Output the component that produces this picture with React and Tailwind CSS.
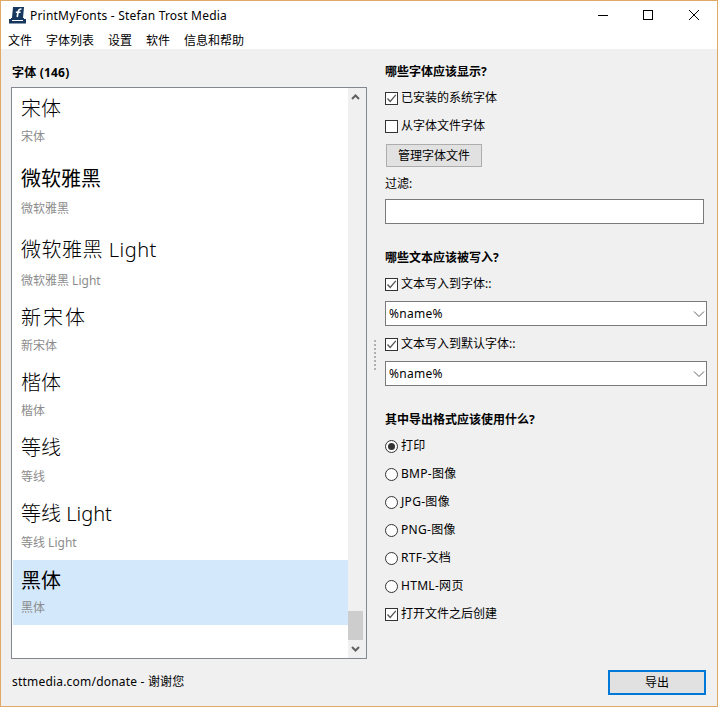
import { useState } from "react";

const fontStack = "font-['Noto_Sans','Noto_Sans_CJK_SC',sans-serif]";

const fonts = [
	{ name: "宋体", height: "h-[69px]", pt: "pt-[7px]", gap: "mt-[7px]", style: "font-light" },
	{ name: "微软雅黑", height: "h-[72px]", pt: "pt-[8px]", gap: "mt-[9px]", style: "font-normal" },
	{ name: "微软雅黑 Light", height: "h-[67px]", pt: "pt-[7px]", gap: "mt-[10px]", style: "font-light tracking-[0.5px]" },
	{ name: "新宋体", height: "h-[65px]", pt: "pt-[8px]", gap: "mt-[7px]", style: "font-light tracking-[2px]" },
	{ name: "楷体", height: "h-[65px]", pt: "pt-[8px]", gap: "mt-[7px]", style: "font-light" },
	{ name: "等线", height: "h-[67px]", pt: "pt-[8px]", gap: "mt-[8px]", style: "font-light" },
	{ name: "等线 Light", height: "h-[66px]", pt: "pt-[7px]", gap: "mt-[8px]", style: "font-light" },
	{ name: "黑体", height: "h-[65px]", pt: "pt-[8px]", gap: "mt-[6px]", style: "font-normal" },
];

const menus = ["文件", "字体列表", "设置", "软件", "信息和帮助"];

function Checkbox({ label, checked, className }) {
	return (
		<div className={`flex items-center h-[16px] gap-[3px] ${className}`}>
			<span className="w-[13px] h-[13px] border border-[#333333] bg-white flex items-center justify-center shrink-0">
				{checked && (
					<svg width="11" height="11" viewBox="0 0 11 11">
						<path d="M1.5 5.5 L4.2 8.5 L9.8 1.8" fill="none" stroke="#555555" strokeWidth="1.3" />
					</svg>
				)}
			</span>
			<span className="text-xs leading-4 text-black">{label}</span>
		</div>
	);
}

function Radio({ label, checked }) {
	return (
		<div className="flex items-center h-[16px] gap-[3px] mb-[12px]">
			<span className="w-[13px] h-[13px] rounded-full border border-[#333333] bg-white flex items-center justify-center shrink-0">
				{checked && <span className="w-[7px] h-[7px] rounded-full bg-[#333333]" />}
			</span>
			<span className="text-xs leading-4 text-black tracking-[0.3px]">{label}</span>
		</div>
	);
}

function Heading({ children, className }) {
	return <div className={`text-xs leading-4 font-bold text-black h-[16px] ${className}`}>{children}</div>;
}

function SelectBox({ className }) {
	return (
		<div className={`w-[322px] h-[25px] border border-[#7a7a7a] bg-white flex items-center justify-between pl-[3px] pr-[1px] ${className}`}>
			<span className="text-xs text-black tracking-[0.3px]">%name%</span>
			<svg width="12" height="8" viewBox="0 0 12 8">
				<path d="M1 1.5 L6 6.5 L11 1.5" fill="none" stroke="#606060" strokeWidth="1" />
			</svg>
		</div>
	);
}

function AppIcon() {
	return (
		<svg width="17" height="17" viewBox="0 0 17 17" className="shrink-0">
			<path d="M4 0 L15 0 L14 11 L3 11 Z" fill="#17375e" />
			<path d="M12.5 2 C9.5 1.8 9.4 3.5 9 5.5 L8.2 10 M6.8 5.2 L11.6 5.2" fill="none" stroke="#ffffff" strokeWidth="1.6" />
			<path d="M2 11 L15 11 L15 12 L17 12 L17 16.5 L0 16.5 L0 12 L2 12 Z" fill="#17375e" />
			<rect x="3" y="13" width="11" height="1" fill="#ffffff" />
		</svg>
	);
}

function WindowButtons() {
	return (
		<div className="flex items-center self-start">
			<svg width="46" height="28" viewBox="0 0 46 28">
				<rect x="19" y="14" width="10" height="1" fill="#000000" />
			</svg>
			<svg width="46" height="28" viewBox="0 0 46 28">
				<rect x="18.5" y="9.5" width="9" height="9" fill="none" stroke="#000000" />
			</svg>
			<svg width="46" height="28" viewBox="0 0 46 28">
				<path d="M18 9 L28 19 M28 9 L18 19" stroke="#000000" fill="none" />
			</svg>
		</div>
	);
}

function FontList() {
	// the last entry is the one selected in the picture
	const [selected, setSelected] = useState("黑体");

	return (
		<div className="h-[572px] border border-[#828790] bg-white flex">
			<div className="w-[336px] pt-[1px] pl-[1px]">
				{fonts.map((font) => (
					<div
						key={font.name}
						onClick={() => setSelected(font.name)}
						className={`${font.height} ${font.pt} pl-[8px] ${selected === font.name ? "bg-[#d4e8fc]" : ""}`}
					>
						<div className={`text-[20px] leading-[26px] text-black ${font.style}`}>{font.name}</div>
						<div className={`text-xs leading-4 text-[#8c8c8c] ${font.gap}`}>{font.name}</div>
					</div>
				))}
			</div>
			<div className="w-[18px] bg-[#f0f0f0] flex flex-col items-center justify-between pt-[6px] pb-[6px] pr-[3px]">
				<svg width="9" height="6" viewBox="0 0 9 6">
					<path d="M1 5 L4.5 1.5 L8 5" fill="none" stroke="#606060" strokeWidth="2" />
				</svg>
				<div className="flex flex-col items-center gap-[6px]">
					<div className="w-[15px] h-[29px] bg-[#cdcdcd]" />
					<svg width="9" height="6" viewBox="0 0 9 6">
						<path d="M1 1 L4.5 4.5 L8 1" fill="none" stroke="#606060" strokeWidth="2" />
					</svg>
				</div>
			</div>
		</div>
	);
}

export default function App() {
	return (
		<div className={`w-[718px] h-[707px] border border-[#e0aa66] flex flex-col bg-[#f0f0f0] overflow-hidden ${fontStack}`}>
			<div className="bg-white h-[48px] flex flex-col">
				<div className="h-[29px] flex items-center justify-between">
					<div className="flex items-center pl-[8px] gap-[4px]">
						<AppIcon />
						<span className="text-xs text-black tracking-[0.2px]">PrintMyFonts - Stefan Trost Media</span>
					</div>
					<WindowButtons />
				</div>
				<div className="flex pl-[7px] gap-[14px] h-[19px] pt-[3px] items-center">
					{menus.map((menu) => (
						<span key={menu} className="text-xs text-black">{menu}</span>
					))}
				</div>
			</div>

			<div className="flex flex-1 pl-[10px]">
				<div className="w-[356px] pt-[16px]">
					<div className="text-xs leading-4 font-bold text-black h-[22px] pl-[1px] tracking-[0.2px]">字体 (146)</div>
					<FontList />
					<div className="text-xs text-black pl-[1px] mt-[15px] tracking-[0.2px]">sttmedia.com/donate - 谢谢您</div>
				</div>

				<div className="w-[18px] pt-[291px] pl-[7px]">
					<div className="w-[2px] h-[30px] border-l-2 border-dotted border-[#b0b0b0]" />
				</div>

				<div className="flex-1 pt-[15px] flex flex-col">
					<Heading className="mb-[10px]">哪些字体应该显示?</Heading>
					<Checkbox label="已安装的系统字体" checked className="mb-[12px]" />
					<Checkbox label="从字体文件字体" />
					<button className="w-[96px] h-[23px] ml-[1px] mt-[10px] bg-[#e1e1e1] border border-[#adadad] text-xs text-black">
						管理字体文件
					</button>
					<div className="text-xs leading-4 text-black mt-[9px]">过滤:</div>
					<div className="w-[319px] h-[25px] mt-[7px] border border-[#7a7a7a] bg-white" />

					<Heading className="mt-[26px] mb-[10px]">哪些文本应该被写入?</Heading>
					<Checkbox label="文本写入到字体::" checked />
					<SelectBox className="mt-[9px]" />
					<Checkbox label="文本写入到默认字体::" checked className="mt-[10px]" />
					<SelectBox className="mt-[9px]" />

					<Heading className="mt-[26px] mb-[10px]">其中导出格式应该使用什么?</Heading>
					<Radio label="打印" checked />
					<Radio label="BMP-图像" />
					<Radio label="JPG-图像" />
					<Radio label="PNG-图像" />
					<Radio label="RTF-文档" />
					<Radio label="HTML-网页" />
					<Checkbox label="打开文件之后创建" checked />

					<div className="flex justify-end pr-[11px] mt-[48px]">
						<button className="w-[98px] h-[25px] bg-[#e1e1e1] border-2 border-[#0078d7] text-xs text-black">
							导出
						</button>
					</div>
				</div>
			</div>
		</div>
	);
}
